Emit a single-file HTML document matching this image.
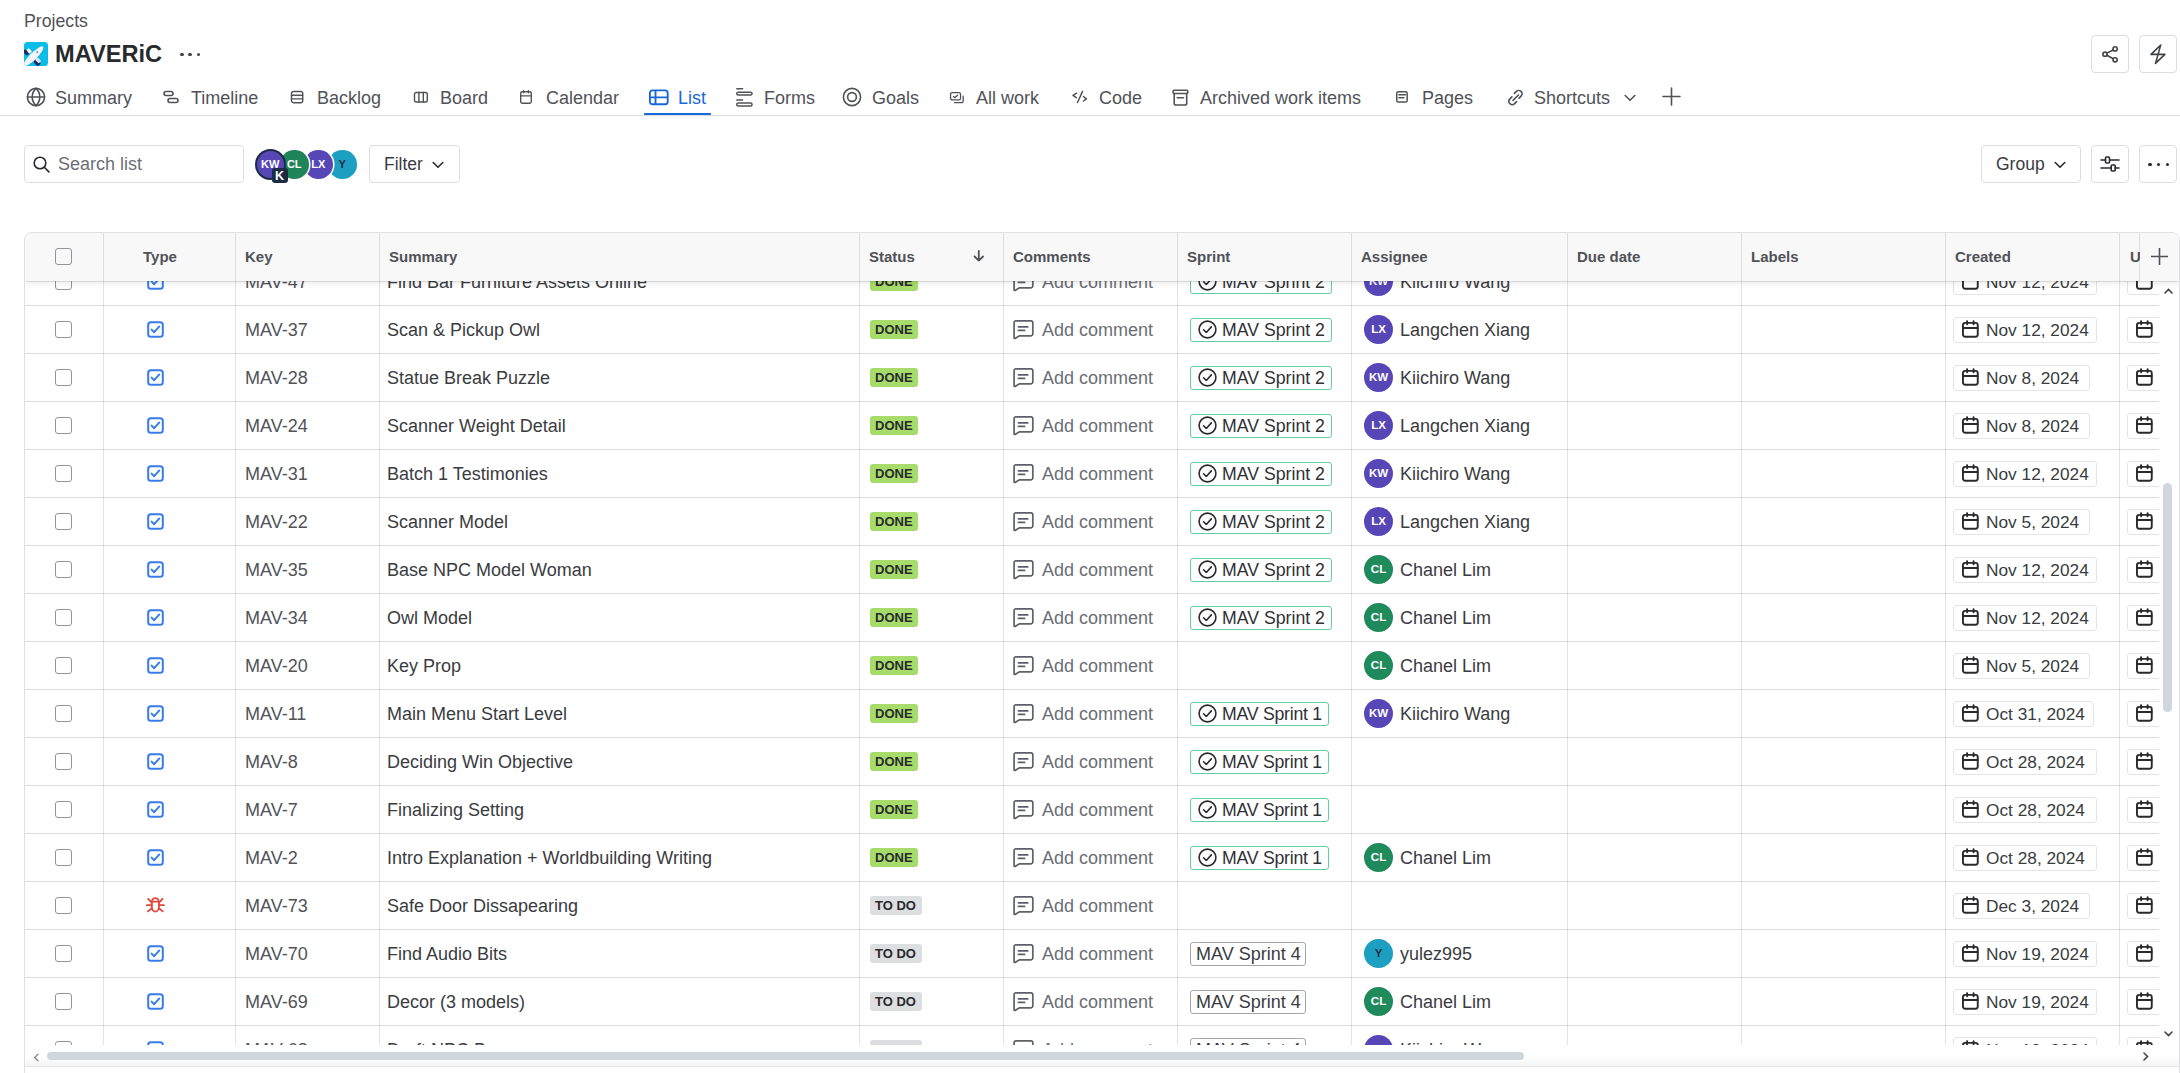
<!DOCTYPE html>
<html><head><meta charset="utf-8"><title>MAVERiC - List</title>
<style>
*{box-sizing:border-box;margin:0;padding:0}
html,body{width:2180px;height:1073px;overflow:hidden;background:#fff}
body{font-family:"Liberation Sans",sans-serif;color:#292a2e;position:relative}
.a{position:absolute;white-space:nowrap}
.ic{position:absolute;display:block;color:#505258}
.ic svg{display:block}
.tab{position:absolute;top:87px;height:22px;line-height:22px;font-size:18px;color:#505258}
.btn{position:absolute;border:1px solid #dcdde0;border-radius:4px;background:#fff}
.hd{position:absolute;top:247px;line-height:20px;font-size:15px;font-weight:bold;color:#505258}
.vl{position:absolute;width:1px;background:rgba(0,0,0,0.1)}
.hl{position:absolute;height:1px;background:rgba(0,0,0,0.135)}
.cb{position:absolute;width:17px;height:17px;border:1.5px solid #92949b;border-radius:3px;background:#fff}
.t{position:absolute;font-size:18px;line-height:22px;white-space:nowrap;color:#3a3c41}
.loz{position:absolute;height:19px;border-radius:3px;font-size:13px;font-weight:bold;line-height:19px;padding:0 5px;color:#292a2e}
.spr{position:absolute;height:24px;border:1px solid #5fcea0;border-radius:3px;font-size:18px;line-height:22px;color:#292a2e}
.av{position:absolute;width:29px;height:29px;border-radius:50%;color:#fff;font-size:11.5px;font-weight:bold;text-align:center;line-height:29px}
.date{position:absolute;height:26px;border:1px solid #e3e4e7;border-radius:3px}
</style></head><body>

<div class="a" style="left:24px;top:9.5px;font-size:17.7px;line-height:22px;color:#505258">Projects</div>
<div class="ic" style="left:24px;top:42px"><svg width="24" height="24" viewBox="0 0 24 24"><defs><clipPath id="lc"><rect width="24" height="24" rx="3.5"/></clipPath></defs><g clip-path="url(#lc)"><rect width="24" height="24" fill="#08bde6"/><g transform="rotate(-45 12 12)"><rect x="4.2" y="0.6" width="3.8" height="6.4" rx="1.8" fill="#1f2a6b"/><rect x="7.6" y="2.4" width="3.6" height="5.2" rx="1.8" fill="#fff"/><rect x="4.4" y="15.8" width="4.4" height="6.4" rx="1.2" fill="#1f2a6b"/><rect x="7.2" y="15.2" width="3.6" height="5.4" rx="1" fill="#e4dcff"/><ellipse cx="8.6" cy="11.8" rx="13.6" ry="3.5" fill="#f3f2ff"/><circle cx="14.2" cy="11.6" r="0.9" fill="#6a6fae"/></g></g></svg></div>
<div class="a" style="left:55px;top:39.5px;font-size:23.6px;line-height:28px;font-weight:bold;color:#292a2e">MAVERiC</div>
<div class="a" style="left:180px;top:52px"><span style="position:absolute;left:0.0px;top:0.5px;width:3.6px;height:3.6px;border-radius:50%;background:#42444a"></span><span style="position:absolute;left:8.3px;top:0.5px;width:3.6px;height:3.6px;border-radius:50%;background:#42444a"></span><span style="position:absolute;left:16.6px;top:0.5px;width:3.6px;height:3.6px;border-radius:50%;background:#42444a"></span></div>
<div class="btn" style="left:2091px;top:35px;width:38px;height:38px;"></div><div class="ic" style="left:2101px;top:44px;color:#42444a"><svg width="18" height="20" viewBox="0 0 18 20" fill="none" stroke="currentColor" stroke-width="1.6" stroke-linecap="round" stroke-linejoin="round"><circle cx="14.1" cy="4.9" r="2.1"/><circle cx="4" cy="10.2" r="2.1"/><circle cx="14.1" cy="15.8" r="2.1"/><path d="M5.9 9.1L12.2 6M5.9 11.3L12.2 14.7"/></svg></div>
<div class="btn" style="left:2139px;top:35px;width:38px;height:38px;"></div><div class="ic" style="left:2149px;top:43px;color:#42444a"><svg width="18" height="22" viewBox="0 0 18 22" fill="none" stroke="currentColor" stroke-width="1.6" stroke-linecap="round" stroke-linejoin="round"><path d="M11.7 2.1L2 11.4H15.9L6.5 20.4Z"/></svg></div>
<div class="ic" style="left:26px;top:87px;color:#505258"><svg width="20" height="20" viewBox="0 0 20 20" fill="none" stroke="currentColor" stroke-width="1.6" stroke-linecap="round" stroke-linejoin="round"><circle cx="10" cy="10" r="8.6"/><path d="M1.6 10h16.8M10 1.4c-2.6 2.4-3.8 5.3-3.8 8.6s1.2 6.2 3.8 8.6M10 1.4c2.6 2.4 3.8 5.3 3.8 8.6s-1.2 6.2-3.8 8.6"/></svg></div>
<div class="tab" style="left:55px;color:#505258">Summary</div>
<div class="ic" style="left:163px;top:89px;color:#505258"><svg width="16" height="16" viewBox="0 0 16 16" fill="none" stroke="currentColor" stroke-width="1.6" stroke-linecap="round" stroke-linejoin="round"><rect x="1" y="2.5" width="9" height="4" rx="2"/><rect x="5" y="9.5" width="10" height="4" rx="2"/></svg></div>
<div class="tab" style="left:191px;color:#505258">Timeline</div>
<div class="ic" style="left:290px;top:90px;color:#505258"><svg width="14" height="14" viewBox="0 0 14 14" fill="none" stroke="currentColor" stroke-linecap="round" stroke-linejoin="round" stroke-width="1.4"><rect x="1.5" y="1.5" width="11.2" height="11.2" rx="2"/><path d="M1.5 5.3H12.7M1.5 8.9H12.7"/></svg></div>
<div class="tab" style="left:317px;color:#505258">Backlog</div>
<div class="ic" style="left:413px;top:91px;color:#505258"><svg width="16" height="13" viewBox="0 0 16 13" fill="none" stroke="currentColor" stroke-linecap="round" stroke-linejoin="round" stroke-width="1.4"><rect x="1.5" y="1.45" width="12.8" height="9.5" rx="1.8"/><path d="M5.9 1.45V10.95M10.3 1.45V10.95"/></svg></div>
<div class="tab" style="left:440px;color:#505258">Board</div>
<div class="ic" style="left:519px;top:89px;color:#505258"><svg width="15" height="16" viewBox="0 0 15 16" fill="none" stroke="currentColor" stroke-linecap="round" stroke-linejoin="round" stroke-width="1.4"><rect x="1.7" y="2.7" width="10.6" height="11.5" rx="1.6"/><path d="M1.7 6.9H12.3M4.5 1.7V3.8M9.4 1.7V3.8"/></svg></div>
<div class="tab" style="left:546px;color:#505258">Calendar</div>
<div class="ic" style="left:648px;top:89px;color:#1868db"><svg width="21" height="17" viewBox="0 0 21 17" fill="none" stroke="currentColor" stroke-width="1.9"><rect x="1.9" y="1.4" width="17.8" height="13.9" rx="2.6"/><path d="M1.9 8.4H19.7M7.5 1.4V15.3"/></svg></div>
<div class="tab" style="left:678px;color:#1868db">List</div>
<div class="ic" style="left:735px;top:87px;color:#505258"><svg width="18" height="21" viewBox="0 0 18 21" fill="none" stroke="currentColor" stroke-linecap="round" stroke-linejoin="round" stroke-width="1.5"><path d="M1.8 1.7H7.6M1.8 12.9H7.6"/><rect x="1.75" y="5.15" width="15.3" height="2.9" rx="1.45"/><rect x="1.75" y="16.05" width="15.3" height="2.9" rx="1.45"/></svg></div>
<div class="tab" style="left:764px;color:#505258">Forms</div>
<div class="ic" style="left:842px;top:87px;color:#505258"><svg width="20" height="20" viewBox="0 0 20 20" fill="none" stroke="currentColor" stroke-width="1.6" stroke-linecap="round" stroke-linejoin="round"><circle cx="10" cy="10" r="8.6"/><circle cx="10" cy="10" r="4.4"/></svg></div>
<div class="tab" style="left:872px;color:#505258">Goals</div>
<div class="ic" style="left:949px;top:91px;color:#505258"><svg width="16" height="13" viewBox="0 0 16 13" fill="none" stroke="currentColor" stroke-linecap="round" stroke-linejoin="round" stroke-width="1.3"><rect x="1.55" y="1.55" width="10" height="7.4" rx="1.6"/><path d="M5.5 11.7H12.6a1.6 1.6 0 0 0 1.6-1.6V5.1"/><path d="M4.5 5.6L6 6.6 8.6 4.2"/></svg></div>
<div class="tab" style="left:976px;color:#505258">All work</div>
<div class="ic" style="left:1071px;top:90px;color:#505258"><svg width="17" height="14" viewBox="0 0 17 14" fill="none" stroke="currentColor" stroke-linecap="round" stroke-linejoin="round" stroke-width="1.5"><path d="M5.6 3.2L2 5.4 5.3 7.7M11.5 1.4L6.5 12.5M12.5 6.5L15.4 8.8 12.5 11"/></svg></div>
<div class="tab" style="left:1099px;color:#505258">Code</div>
<div class="ic" style="left:1171px;top:88px;color:#505258"><svg width="19" height="19" viewBox="0 0 19 19" fill="none" stroke="currentColor" stroke-linecap="round" stroke-linejoin="round" stroke-width="1.6"><rect x="2.1" y="2.2" width="14.7" height="3.3" rx="1"/><path d="M3.2 5.5V15.2a1.8 1.8 0 0 0 1.8 1.8H13.9a1.8 1.8 0 0 0 1.8-1.8V5.5M6.2 9.8H12.5"/></svg></div>
<div class="tab" style="left:1200px;color:#505258">Archived work items</div>
<div class="ic" style="left:1395px;top:90px;color:#505258"><svg width="14" height="14" viewBox="0 0 14 14" fill="none" stroke="currentColor" stroke-linecap="round" stroke-linejoin="round" stroke-width="1.5"><rect x="1.75" y="1.7" width="10.4" height="10.3" rx="1.6"/><path d="M3.9 4.7H10.4M3.9 7.8H8.9"/></svg></div>
<div class="tab" style="left:1422px;color:#505258">Pages</div>
<div class="ic" style="left:1506px;top:88px;color:#505258"><svg width="19" height="19" viewBox="0 0 19 19" fill="none" stroke="currentColor" stroke-linecap="round" stroke-linejoin="round" stroke-width="1.6"><path d="M7 12.4L12.4 7"/><path d="M8.4 5.4L10.4 3.4a3.3 3.3 0 0 1 4.7 4.7L13.1 10.1"/><path d="M10.6 13.6L8.6 15.6a3.3 3.3 0 0 1-4.7-4.7L5.9 8.9"/></svg></div>
<div class="tab" style="left:1534px;color:#505258">Shortcuts</div>
<div class="ic" style="left:1624px;top:94px;color:#505258"><svg width="12" height="8" viewBox="0 0 12 8" fill="none" stroke="currentColor" stroke-width="1.6" stroke-linecap="round" stroke-linejoin="round" stroke-width="1.8"><path d="M1.2 1.5L6 6.2l4.8-4.7"/></svg></div>
<div class="ic" style="left:1662px;top:87px;color:#505258"><svg width="19" height="19" viewBox="0 0 19 19" fill="none" stroke="currentColor" stroke-width="1.6" stroke-linecap="round" stroke-linejoin="round" stroke-width="1.8"><path d="M9.5 1v17M1 9.5h17"/></svg></div>
<div class="a" style="left:644px;top:113px;width:67px;height:3px;background:#1868db;border-radius:1px 1px 0 0"></div>
<div class="a" style="left:0;top:115px;width:2180px;height:1px;background:#dcdde0"></div>
<div class="btn" style="left:24px;top:145px;width:220px;height:38px;"></div>
<div class="ic" style="left:33px;top:156px;color:#292a2e"><svg width="17" height="17" viewBox="0 0 17 17" fill="none" stroke="currentColor" stroke-width="1.6" stroke-linecap="round" stroke-linejoin="round" stroke-width="2"><circle cx="7" cy="7" r="5.8"/><path d="M11.3 11.3l4.6 4.6"/></svg></div>
<div class="t" style="left:58px;top:153px;color:#6b6e76">Search list</div>
<div class="av" style="left:328px;top:150px;width:28.5px;height:28.5px;line-height:28.5px;font-size:11px;background:#1d9fc1;color:#1c2b42">Y</div>
<div class="av" style="left:304px;top:150px;width:28.5px;height:28.5px;line-height:28.5px;font-size:11px;background:#5746b6;box-shadow:0 0 0 1.5px #fff">LX</div>
<div class="av" style="left:280px;top:150px;width:28.5px;height:28.5px;line-height:28.5px;font-size:11px;background:#1f845a;box-shadow:0 0 0 1.5px #fff">CL</div>
<div class="a" style="left:254.5px;top:148.5px;width:31.5px;height:31.5px;border-radius:50%;background:#1c2b42"></div>
<div class="av" style="left:256.5px;top:150.5px;width:27.5px;height:27.5px;line-height:27.5px;font-size:11px;background:#5746b6">KW</div>
<div class="a" style="left:271.5px;top:167.5px;width:16px;height:15px;border-radius:3px;background:#1c2b42;color:#fff;font-size:12.5px;font-weight:bold;line-height:16px;text-align:center">K</div>
<div class="btn" style="left:369px;top:145px;width:91px;height:38px;"></div>
<div class="t" style="left:384px;top:153px;font-size:17.5px">Filter</div>
<div class="ic" style="left:432px;top:161px;color:#292a2e"><svg width="12" height="8" viewBox="0 0 12 8" fill="none" stroke="currentColor" stroke-width="1.6" stroke-linecap="round" stroke-linejoin="round" stroke-width="1.8"><path d="M1.2 1.5L6 6.2l4.8-4.7"/></svg></div>
<div class="btn" style="left:1981px;top:145px;width:100px;height:38px;"></div>
<div class="t" style="left:1996px;top:153px;font-size:17.5px">Group</div>
<div class="ic" style="left:2054px;top:161px;color:#292a2e"><svg width="12" height="8" viewBox="0 0 12 8" fill="none" stroke="currentColor" stroke-width="1.6" stroke-linecap="round" stroke-linejoin="round" stroke-width="1.8"><path d="M1.2 1.5L6 6.2l4.8-4.7"/></svg></div>
<div class="btn" style="left:2091px;top:145px;width:38px;height:38px;"></div><div class="ic" style="left:2100px;top:155px;color:#292a2e"><svg width="20" height="18" viewBox="0 0 20 18" fill="none" stroke="currentColor" stroke-width="1.6" stroke-linecap="round" stroke-linejoin="round" stroke-width="1.7"><path d="M1 5h4.5M10 5h9M1 13h10.2M15.2 13H19"/><rect x="5.5" y="2" width="4" height="6" rx="1"/><rect x="11.2" y="10" width="4" height="6" rx="1"/></svg></div>
<div class="btn" style="left:2139px;top:145px;width:38px;height:38px;"></div>
<div class="a" style="left:2148px;top:162.5px"><span style="position:absolute;left:0.0px;top:0;width:3.6px;height:3.6px;border-radius:50%;background:#292a2e"></span><span style="position:absolute;left:8.8px;top:0;width:3.6px;height:3.6px;border-radius:50%;background:#292a2e"></span><span style="position:absolute;left:17.6px;top:0;width:3.6px;height:3.6px;border-radius:50%;background:#292a2e"></span></div>
<div class="a" style="left:24px;top:232px;width:2156px;height:900px;border:1px solid #dfe0e3;border-radius:8px;overflow:hidden">
<div class="a" style="left:0;top:0;width:2134px;height:812px;overflow:hidden">
<div class="hl" style="left:0;top:72px;width:2134px"></div>
<div class="cb" style="left:30px;top:40px"></div>
<div class="ic" style="left:122px;top:40px"><svg width="17" height="17" viewBox="0 0 17 17" fill="none" stroke="#357de8" stroke-width="2" stroke-linecap="round" stroke-linejoin="round"><rect x="1.2" y="1.2" width="14.6" height="14.6" rx="2.6"/><path d="M4.6 8.6l2.6 2.6 5-5.6"/></svg></div>
<div class="t" style="left:220px;top:38px;color:#505258">MAV-47</div>
<div class="t" style="left:362px;top:38px">Find Bar Furniture Assets Online</div>
<div class="loz" style="left:845px;top:39px;width:48px;background:#a8dc6a">DONE</div>
<div class="ic" style="left:988px;top:39px;color:#5d6068"><svg width="21" height="20" viewBox="0 0 21 20" fill="none" stroke="currentColor" stroke-width="1.7" stroke-linecap="round" stroke-linejoin="round"><path d="M2.9 0.9H18a1.8 1.8 0 0 1 1.8 1.8V14a1.8 1.8 0 0 1-1.8 1.8H6.6L2 18.4A.6.6 0 0 1 1.1 17.9V2.7a1.8 1.8 0 0 1 1.8-1.8z"/><path d="M5.4 6.8H14.8M5.4 10.4H11.6"/></svg></div>
<div class="t" style="left:1017px;top:38px;color:#6b6e76">Add comment</div>
<div class="spr" style="left:1165px;top:37px;width:142px"></div>
<div class="ic" style="left:1173px;top:39px;color:#292a2e"><svg width="19" height="19" viewBox="0 0 19 19" fill="none" stroke="currentColor" stroke-width="1.6" stroke-linecap="round" stroke-linejoin="round" stroke-width="1.8"><circle cx="9.5" cy="9.5" r="8.4"/><path d="M5.6 9.8l2.7 2.7 5-5.6"/></svg></div>
<div class="t" style="left:1197px;top:38px;font-size:17.7px;color:#2f3136">MAV Sprint 2</div>
<div class="av" style="left:1339px;top:34px;background:#5746b6">KW</div>
<div class="t" style="left:1375px;top:38px">Kiichiro Wang</div>
<div class="date" style="left:1928px;top:36px;width:144px"></div>
<div class="ic" style="left:1937px;top:39px;color:#292a2e"><svg width="17" height="19" viewBox="0 0 17 19" fill="none" stroke="currentColor" stroke-width="1.9" stroke-linecap="round" stroke-linejoin="round"><rect x="0.95" y="2.85" width="14.8" height="13.9" rx="2.2"/><path d="M0.95 8H15.75M5.1 1.1V4.3M11.6 1.1V4.3"/></svg></div>
<div class="t" style="left:1961px;top:38px;font-size:17.3px">Nov 12, 2024</div>
<div class="date" style="left:2102px;top:36px;width:60px"></div>
<div class="ic" style="left:2111px;top:39px;color:#292a2e"><svg width="17" height="19" viewBox="0 0 17 19" fill="none" stroke="currentColor" stroke-width="1.9" stroke-linecap="round" stroke-linejoin="round"><rect x="0.95" y="2.85" width="14.8" height="13.9" rx="2.2"/><path d="M0.95 8H15.75M5.1 1.1V4.3M11.6 1.1V4.3"/></svg></div>
<div class="hl" style="left:0;top:120px;width:2134px"></div>
<div class="cb" style="left:30px;top:88px"></div>
<div class="ic" style="left:122px;top:88px"><svg width="17" height="17" viewBox="0 0 17 17" fill="none" stroke="#357de8" stroke-width="2" stroke-linecap="round" stroke-linejoin="round"><rect x="1.2" y="1.2" width="14.6" height="14.6" rx="2.6"/><path d="M4.6 8.6l2.6 2.6 5-5.6"/></svg></div>
<div class="t" style="left:220px;top:86px;color:#505258">MAV-37</div>
<div class="t" style="left:362px;top:86px">Scan &amp; Pickup Owl</div>
<div class="loz" style="left:845px;top:87px;width:48px;background:#a8dc6a">DONE</div>
<div class="ic" style="left:988px;top:87px;color:#5d6068"><svg width="21" height="20" viewBox="0 0 21 20" fill="none" stroke="currentColor" stroke-width="1.7" stroke-linecap="round" stroke-linejoin="round"><path d="M2.9 0.9H18a1.8 1.8 0 0 1 1.8 1.8V14a1.8 1.8 0 0 1-1.8 1.8H6.6L2 18.4A.6.6 0 0 1 1.1 17.9V2.7a1.8 1.8 0 0 1 1.8-1.8z"/><path d="M5.4 6.8H14.8M5.4 10.4H11.6"/></svg></div>
<div class="t" style="left:1017px;top:86px;color:#6b6e76">Add comment</div>
<div class="spr" style="left:1165px;top:85px;width:142px"></div>
<div class="ic" style="left:1173px;top:87px;color:#292a2e"><svg width="19" height="19" viewBox="0 0 19 19" fill="none" stroke="currentColor" stroke-width="1.6" stroke-linecap="round" stroke-linejoin="round" stroke-width="1.8"><circle cx="9.5" cy="9.5" r="8.4"/><path d="M5.6 9.8l2.7 2.7 5-5.6"/></svg></div>
<div class="t" style="left:1197px;top:86px;font-size:17.7px;color:#2f3136">MAV Sprint 2</div>
<div class="av" style="left:1339px;top:82px;background:#5746b6">LX</div>
<div class="t" style="left:1375px;top:86px">Langchen Xiang</div>
<div class="date" style="left:1928px;top:84px;width:144px"></div>
<div class="ic" style="left:1937px;top:87px;color:#292a2e"><svg width="17" height="19" viewBox="0 0 17 19" fill="none" stroke="currentColor" stroke-width="1.9" stroke-linecap="round" stroke-linejoin="round"><rect x="0.95" y="2.85" width="14.8" height="13.9" rx="2.2"/><path d="M0.95 8H15.75M5.1 1.1V4.3M11.6 1.1V4.3"/></svg></div>
<div class="t" style="left:1961px;top:86px;font-size:17.3px">Nov 12, 2024</div>
<div class="date" style="left:2102px;top:84px;width:60px"></div>
<div class="ic" style="left:2111px;top:87px;color:#292a2e"><svg width="17" height="19" viewBox="0 0 17 19" fill="none" stroke="currentColor" stroke-width="1.9" stroke-linecap="round" stroke-linejoin="round"><rect x="0.95" y="2.85" width="14.8" height="13.9" rx="2.2"/><path d="M0.95 8H15.75M5.1 1.1V4.3M11.6 1.1V4.3"/></svg></div>
<div class="hl" style="left:0;top:168px;width:2134px"></div>
<div class="cb" style="left:30px;top:136px"></div>
<div class="ic" style="left:122px;top:136px"><svg width="17" height="17" viewBox="0 0 17 17" fill="none" stroke="#357de8" stroke-width="2" stroke-linecap="round" stroke-linejoin="round"><rect x="1.2" y="1.2" width="14.6" height="14.6" rx="2.6"/><path d="M4.6 8.6l2.6 2.6 5-5.6"/></svg></div>
<div class="t" style="left:220px;top:134px;color:#505258">MAV-28</div>
<div class="t" style="left:362px;top:134px">Statue Break Puzzle</div>
<div class="loz" style="left:845px;top:135px;width:48px;background:#a8dc6a">DONE</div>
<div class="ic" style="left:988px;top:135px;color:#5d6068"><svg width="21" height="20" viewBox="0 0 21 20" fill="none" stroke="currentColor" stroke-width="1.7" stroke-linecap="round" stroke-linejoin="round"><path d="M2.9 0.9H18a1.8 1.8 0 0 1 1.8 1.8V14a1.8 1.8 0 0 1-1.8 1.8H6.6L2 18.4A.6.6 0 0 1 1.1 17.9V2.7a1.8 1.8 0 0 1 1.8-1.8z"/><path d="M5.4 6.8H14.8M5.4 10.4H11.6"/></svg></div>
<div class="t" style="left:1017px;top:134px;color:#6b6e76">Add comment</div>
<div class="spr" style="left:1165px;top:133px;width:142px"></div>
<div class="ic" style="left:1173px;top:135px;color:#292a2e"><svg width="19" height="19" viewBox="0 0 19 19" fill="none" stroke="currentColor" stroke-width="1.6" stroke-linecap="round" stroke-linejoin="round" stroke-width="1.8"><circle cx="9.5" cy="9.5" r="8.4"/><path d="M5.6 9.8l2.7 2.7 5-5.6"/></svg></div>
<div class="t" style="left:1197px;top:134px;font-size:17.7px;color:#2f3136">MAV Sprint 2</div>
<div class="av" style="left:1339px;top:130px;background:#5746b6">KW</div>
<div class="t" style="left:1375px;top:134px">Kiichiro Wang</div>
<div class="date" style="left:1928px;top:132px;width:137px"></div>
<div class="ic" style="left:1937px;top:135px;color:#292a2e"><svg width="17" height="19" viewBox="0 0 17 19" fill="none" stroke="currentColor" stroke-width="1.9" stroke-linecap="round" stroke-linejoin="round"><rect x="0.95" y="2.85" width="14.8" height="13.9" rx="2.2"/><path d="M0.95 8H15.75M5.1 1.1V4.3M11.6 1.1V4.3"/></svg></div>
<div class="t" style="left:1961px;top:134px;font-size:17.3px">Nov 8, 2024</div>
<div class="date" style="left:2102px;top:132px;width:60px"></div>
<div class="ic" style="left:2111px;top:135px;color:#292a2e"><svg width="17" height="19" viewBox="0 0 17 19" fill="none" stroke="currentColor" stroke-width="1.9" stroke-linecap="round" stroke-linejoin="round"><rect x="0.95" y="2.85" width="14.8" height="13.9" rx="2.2"/><path d="M0.95 8H15.75M5.1 1.1V4.3M11.6 1.1V4.3"/></svg></div>
<div class="hl" style="left:0;top:216px;width:2134px"></div>
<div class="cb" style="left:30px;top:184px"></div>
<div class="ic" style="left:122px;top:184px"><svg width="17" height="17" viewBox="0 0 17 17" fill="none" stroke="#357de8" stroke-width="2" stroke-linecap="round" stroke-linejoin="round"><rect x="1.2" y="1.2" width="14.6" height="14.6" rx="2.6"/><path d="M4.6 8.6l2.6 2.6 5-5.6"/></svg></div>
<div class="t" style="left:220px;top:182px;color:#505258">MAV-24</div>
<div class="t" style="left:362px;top:182px">Scanner Weight Detail</div>
<div class="loz" style="left:845px;top:183px;width:48px;background:#a8dc6a">DONE</div>
<div class="ic" style="left:988px;top:183px;color:#5d6068"><svg width="21" height="20" viewBox="0 0 21 20" fill="none" stroke="currentColor" stroke-width="1.7" stroke-linecap="round" stroke-linejoin="round"><path d="M2.9 0.9H18a1.8 1.8 0 0 1 1.8 1.8V14a1.8 1.8 0 0 1-1.8 1.8H6.6L2 18.4A.6.6 0 0 1 1.1 17.9V2.7a1.8 1.8 0 0 1 1.8-1.8z"/><path d="M5.4 6.8H14.8M5.4 10.4H11.6"/></svg></div>
<div class="t" style="left:1017px;top:182px;color:#6b6e76">Add comment</div>
<div class="spr" style="left:1165px;top:181px;width:142px"></div>
<div class="ic" style="left:1173px;top:183px;color:#292a2e"><svg width="19" height="19" viewBox="0 0 19 19" fill="none" stroke="currentColor" stroke-width="1.6" stroke-linecap="round" stroke-linejoin="round" stroke-width="1.8"><circle cx="9.5" cy="9.5" r="8.4"/><path d="M5.6 9.8l2.7 2.7 5-5.6"/></svg></div>
<div class="t" style="left:1197px;top:182px;font-size:17.7px;color:#2f3136">MAV Sprint 2</div>
<div class="av" style="left:1339px;top:178px;background:#5746b6">LX</div>
<div class="t" style="left:1375px;top:182px">Langchen Xiang</div>
<div class="date" style="left:1928px;top:180px;width:137px"></div>
<div class="ic" style="left:1937px;top:183px;color:#292a2e"><svg width="17" height="19" viewBox="0 0 17 19" fill="none" stroke="currentColor" stroke-width="1.9" stroke-linecap="round" stroke-linejoin="round"><rect x="0.95" y="2.85" width="14.8" height="13.9" rx="2.2"/><path d="M0.95 8H15.75M5.1 1.1V4.3M11.6 1.1V4.3"/></svg></div>
<div class="t" style="left:1961px;top:182px;font-size:17.3px">Nov 8, 2024</div>
<div class="date" style="left:2102px;top:180px;width:60px"></div>
<div class="ic" style="left:2111px;top:183px;color:#292a2e"><svg width="17" height="19" viewBox="0 0 17 19" fill="none" stroke="currentColor" stroke-width="1.9" stroke-linecap="round" stroke-linejoin="round"><rect x="0.95" y="2.85" width="14.8" height="13.9" rx="2.2"/><path d="M0.95 8H15.75M5.1 1.1V4.3M11.6 1.1V4.3"/></svg></div>
<div class="hl" style="left:0;top:264px;width:2134px"></div>
<div class="cb" style="left:30px;top:232px"></div>
<div class="ic" style="left:122px;top:232px"><svg width="17" height="17" viewBox="0 0 17 17" fill="none" stroke="#357de8" stroke-width="2" stroke-linecap="round" stroke-linejoin="round"><rect x="1.2" y="1.2" width="14.6" height="14.6" rx="2.6"/><path d="M4.6 8.6l2.6 2.6 5-5.6"/></svg></div>
<div class="t" style="left:220px;top:230px;color:#505258">MAV-31</div>
<div class="t" style="left:362px;top:230px">Batch 1 Testimonies</div>
<div class="loz" style="left:845px;top:231px;width:48px;background:#a8dc6a">DONE</div>
<div class="ic" style="left:988px;top:231px;color:#5d6068"><svg width="21" height="20" viewBox="0 0 21 20" fill="none" stroke="currentColor" stroke-width="1.7" stroke-linecap="round" stroke-linejoin="round"><path d="M2.9 0.9H18a1.8 1.8 0 0 1 1.8 1.8V14a1.8 1.8 0 0 1-1.8 1.8H6.6L2 18.4A.6.6 0 0 1 1.1 17.9V2.7a1.8 1.8 0 0 1 1.8-1.8z"/><path d="M5.4 6.8H14.8M5.4 10.4H11.6"/></svg></div>
<div class="t" style="left:1017px;top:230px;color:#6b6e76">Add comment</div>
<div class="spr" style="left:1165px;top:229px;width:142px"></div>
<div class="ic" style="left:1173px;top:231px;color:#292a2e"><svg width="19" height="19" viewBox="0 0 19 19" fill="none" stroke="currentColor" stroke-width="1.6" stroke-linecap="round" stroke-linejoin="round" stroke-width="1.8"><circle cx="9.5" cy="9.5" r="8.4"/><path d="M5.6 9.8l2.7 2.7 5-5.6"/></svg></div>
<div class="t" style="left:1197px;top:230px;font-size:17.7px;color:#2f3136">MAV Sprint 2</div>
<div class="av" style="left:1339px;top:226px;background:#5746b6">KW</div>
<div class="t" style="left:1375px;top:230px">Kiichiro Wang</div>
<div class="date" style="left:1928px;top:228px;width:144px"></div>
<div class="ic" style="left:1937px;top:231px;color:#292a2e"><svg width="17" height="19" viewBox="0 0 17 19" fill="none" stroke="currentColor" stroke-width="1.9" stroke-linecap="round" stroke-linejoin="round"><rect x="0.95" y="2.85" width="14.8" height="13.9" rx="2.2"/><path d="M0.95 8H15.75M5.1 1.1V4.3M11.6 1.1V4.3"/></svg></div>
<div class="t" style="left:1961px;top:230px;font-size:17.3px">Nov 12, 2024</div>
<div class="date" style="left:2102px;top:228px;width:60px"></div>
<div class="ic" style="left:2111px;top:231px;color:#292a2e"><svg width="17" height="19" viewBox="0 0 17 19" fill="none" stroke="currentColor" stroke-width="1.9" stroke-linecap="round" stroke-linejoin="round"><rect x="0.95" y="2.85" width="14.8" height="13.9" rx="2.2"/><path d="M0.95 8H15.75M5.1 1.1V4.3M11.6 1.1V4.3"/></svg></div>
<div class="hl" style="left:0;top:312px;width:2134px"></div>
<div class="cb" style="left:30px;top:280px"></div>
<div class="ic" style="left:122px;top:280px"><svg width="17" height="17" viewBox="0 0 17 17" fill="none" stroke="#357de8" stroke-width="2" stroke-linecap="round" stroke-linejoin="round"><rect x="1.2" y="1.2" width="14.6" height="14.6" rx="2.6"/><path d="M4.6 8.6l2.6 2.6 5-5.6"/></svg></div>
<div class="t" style="left:220px;top:278px;color:#505258">MAV-22</div>
<div class="t" style="left:362px;top:278px">Scanner Model</div>
<div class="loz" style="left:845px;top:279px;width:48px;background:#a8dc6a">DONE</div>
<div class="ic" style="left:988px;top:279px;color:#5d6068"><svg width="21" height="20" viewBox="0 0 21 20" fill="none" stroke="currentColor" stroke-width="1.7" stroke-linecap="round" stroke-linejoin="round"><path d="M2.9 0.9H18a1.8 1.8 0 0 1 1.8 1.8V14a1.8 1.8 0 0 1-1.8 1.8H6.6L2 18.4A.6.6 0 0 1 1.1 17.9V2.7a1.8 1.8 0 0 1 1.8-1.8z"/><path d="M5.4 6.8H14.8M5.4 10.4H11.6"/></svg></div>
<div class="t" style="left:1017px;top:278px;color:#6b6e76">Add comment</div>
<div class="spr" style="left:1165px;top:277px;width:142px"></div>
<div class="ic" style="left:1173px;top:279px;color:#292a2e"><svg width="19" height="19" viewBox="0 0 19 19" fill="none" stroke="currentColor" stroke-width="1.6" stroke-linecap="round" stroke-linejoin="round" stroke-width="1.8"><circle cx="9.5" cy="9.5" r="8.4"/><path d="M5.6 9.8l2.7 2.7 5-5.6"/></svg></div>
<div class="t" style="left:1197px;top:278px;font-size:17.7px;color:#2f3136">MAV Sprint 2</div>
<div class="av" style="left:1339px;top:274px;background:#5746b6">LX</div>
<div class="t" style="left:1375px;top:278px">Langchen Xiang</div>
<div class="date" style="left:1928px;top:276px;width:137px"></div>
<div class="ic" style="left:1937px;top:279px;color:#292a2e"><svg width="17" height="19" viewBox="0 0 17 19" fill="none" stroke="currentColor" stroke-width="1.9" stroke-linecap="round" stroke-linejoin="round"><rect x="0.95" y="2.85" width="14.8" height="13.9" rx="2.2"/><path d="M0.95 8H15.75M5.1 1.1V4.3M11.6 1.1V4.3"/></svg></div>
<div class="t" style="left:1961px;top:278px;font-size:17.3px">Nov 5, 2024</div>
<div class="date" style="left:2102px;top:276px;width:60px"></div>
<div class="ic" style="left:2111px;top:279px;color:#292a2e"><svg width="17" height="19" viewBox="0 0 17 19" fill="none" stroke="currentColor" stroke-width="1.9" stroke-linecap="round" stroke-linejoin="round"><rect x="0.95" y="2.85" width="14.8" height="13.9" rx="2.2"/><path d="M0.95 8H15.75M5.1 1.1V4.3M11.6 1.1V4.3"/></svg></div>
<div class="hl" style="left:0;top:360px;width:2134px"></div>
<div class="cb" style="left:30px;top:328px"></div>
<div class="ic" style="left:122px;top:328px"><svg width="17" height="17" viewBox="0 0 17 17" fill="none" stroke="#357de8" stroke-width="2" stroke-linecap="round" stroke-linejoin="round"><rect x="1.2" y="1.2" width="14.6" height="14.6" rx="2.6"/><path d="M4.6 8.6l2.6 2.6 5-5.6"/></svg></div>
<div class="t" style="left:220px;top:326px;color:#505258">MAV-35</div>
<div class="t" style="left:362px;top:326px">Base NPC Model Woman</div>
<div class="loz" style="left:845px;top:327px;width:48px;background:#a8dc6a">DONE</div>
<div class="ic" style="left:988px;top:327px;color:#5d6068"><svg width="21" height="20" viewBox="0 0 21 20" fill="none" stroke="currentColor" stroke-width="1.7" stroke-linecap="round" stroke-linejoin="round"><path d="M2.9 0.9H18a1.8 1.8 0 0 1 1.8 1.8V14a1.8 1.8 0 0 1-1.8 1.8H6.6L2 18.4A.6.6 0 0 1 1.1 17.9V2.7a1.8 1.8 0 0 1 1.8-1.8z"/><path d="M5.4 6.8H14.8M5.4 10.4H11.6"/></svg></div>
<div class="t" style="left:1017px;top:326px;color:#6b6e76">Add comment</div>
<div class="spr" style="left:1165px;top:325px;width:142px"></div>
<div class="ic" style="left:1173px;top:327px;color:#292a2e"><svg width="19" height="19" viewBox="0 0 19 19" fill="none" stroke="currentColor" stroke-width="1.6" stroke-linecap="round" stroke-linejoin="round" stroke-width="1.8"><circle cx="9.5" cy="9.5" r="8.4"/><path d="M5.6 9.8l2.7 2.7 5-5.6"/></svg></div>
<div class="t" style="left:1197px;top:326px;font-size:17.7px;color:#2f3136">MAV Sprint 2</div>
<div class="av" style="left:1339px;top:322px;background:#1f8a5c">CL</div>
<div class="t" style="left:1375px;top:326px">Chanel Lim</div>
<div class="date" style="left:1928px;top:324px;width:144px"></div>
<div class="ic" style="left:1937px;top:327px;color:#292a2e"><svg width="17" height="19" viewBox="0 0 17 19" fill="none" stroke="currentColor" stroke-width="1.9" stroke-linecap="round" stroke-linejoin="round"><rect x="0.95" y="2.85" width="14.8" height="13.9" rx="2.2"/><path d="M0.95 8H15.75M5.1 1.1V4.3M11.6 1.1V4.3"/></svg></div>
<div class="t" style="left:1961px;top:326px;font-size:17.3px">Nov 12, 2024</div>
<div class="date" style="left:2102px;top:324px;width:60px"></div>
<div class="ic" style="left:2111px;top:327px;color:#292a2e"><svg width="17" height="19" viewBox="0 0 17 19" fill="none" stroke="currentColor" stroke-width="1.9" stroke-linecap="round" stroke-linejoin="round"><rect x="0.95" y="2.85" width="14.8" height="13.9" rx="2.2"/><path d="M0.95 8H15.75M5.1 1.1V4.3M11.6 1.1V4.3"/></svg></div>
<div class="hl" style="left:0;top:408px;width:2134px"></div>
<div class="cb" style="left:30px;top:376px"></div>
<div class="ic" style="left:122px;top:376px"><svg width="17" height="17" viewBox="0 0 17 17" fill="none" stroke="#357de8" stroke-width="2" stroke-linecap="round" stroke-linejoin="round"><rect x="1.2" y="1.2" width="14.6" height="14.6" rx="2.6"/><path d="M4.6 8.6l2.6 2.6 5-5.6"/></svg></div>
<div class="t" style="left:220px;top:374px;color:#505258">MAV-34</div>
<div class="t" style="left:362px;top:374px">Owl Model</div>
<div class="loz" style="left:845px;top:375px;width:48px;background:#a8dc6a">DONE</div>
<div class="ic" style="left:988px;top:375px;color:#5d6068"><svg width="21" height="20" viewBox="0 0 21 20" fill="none" stroke="currentColor" stroke-width="1.7" stroke-linecap="round" stroke-linejoin="round"><path d="M2.9 0.9H18a1.8 1.8 0 0 1 1.8 1.8V14a1.8 1.8 0 0 1-1.8 1.8H6.6L2 18.4A.6.6 0 0 1 1.1 17.9V2.7a1.8 1.8 0 0 1 1.8-1.8z"/><path d="M5.4 6.8H14.8M5.4 10.4H11.6"/></svg></div>
<div class="t" style="left:1017px;top:374px;color:#6b6e76">Add comment</div>
<div class="spr" style="left:1165px;top:373px;width:142px"></div>
<div class="ic" style="left:1173px;top:375px;color:#292a2e"><svg width="19" height="19" viewBox="0 0 19 19" fill="none" stroke="currentColor" stroke-width="1.6" stroke-linecap="round" stroke-linejoin="round" stroke-width="1.8"><circle cx="9.5" cy="9.5" r="8.4"/><path d="M5.6 9.8l2.7 2.7 5-5.6"/></svg></div>
<div class="t" style="left:1197px;top:374px;font-size:17.7px;color:#2f3136">MAV Sprint 2</div>
<div class="av" style="left:1339px;top:370px;background:#1f8a5c">CL</div>
<div class="t" style="left:1375px;top:374px">Chanel Lim</div>
<div class="date" style="left:1928px;top:372px;width:144px"></div>
<div class="ic" style="left:1937px;top:375px;color:#292a2e"><svg width="17" height="19" viewBox="0 0 17 19" fill="none" stroke="currentColor" stroke-width="1.9" stroke-linecap="round" stroke-linejoin="round"><rect x="0.95" y="2.85" width="14.8" height="13.9" rx="2.2"/><path d="M0.95 8H15.75M5.1 1.1V4.3M11.6 1.1V4.3"/></svg></div>
<div class="t" style="left:1961px;top:374px;font-size:17.3px">Nov 12, 2024</div>
<div class="date" style="left:2102px;top:372px;width:60px"></div>
<div class="ic" style="left:2111px;top:375px;color:#292a2e"><svg width="17" height="19" viewBox="0 0 17 19" fill="none" stroke="currentColor" stroke-width="1.9" stroke-linecap="round" stroke-linejoin="round"><rect x="0.95" y="2.85" width="14.8" height="13.9" rx="2.2"/><path d="M0.95 8H15.75M5.1 1.1V4.3M11.6 1.1V4.3"/></svg></div>
<div class="hl" style="left:0;top:456px;width:2134px"></div>
<div class="cb" style="left:30px;top:424px"></div>
<div class="ic" style="left:122px;top:424px"><svg width="17" height="17" viewBox="0 0 17 17" fill="none" stroke="#357de8" stroke-width="2" stroke-linecap="round" stroke-linejoin="round"><rect x="1.2" y="1.2" width="14.6" height="14.6" rx="2.6"/><path d="M4.6 8.6l2.6 2.6 5-5.6"/></svg></div>
<div class="t" style="left:220px;top:422px;color:#505258">MAV-20</div>
<div class="t" style="left:362px;top:422px">Key Prop</div>
<div class="loz" style="left:845px;top:423px;width:48px;background:#a8dc6a">DONE</div>
<div class="ic" style="left:988px;top:423px;color:#5d6068"><svg width="21" height="20" viewBox="0 0 21 20" fill="none" stroke="currentColor" stroke-width="1.7" stroke-linecap="round" stroke-linejoin="round"><path d="M2.9 0.9H18a1.8 1.8 0 0 1 1.8 1.8V14a1.8 1.8 0 0 1-1.8 1.8H6.6L2 18.4A.6.6 0 0 1 1.1 17.9V2.7a1.8 1.8 0 0 1 1.8-1.8z"/><path d="M5.4 6.8H14.8M5.4 10.4H11.6"/></svg></div>
<div class="t" style="left:1017px;top:422px;color:#6b6e76">Add comment</div>
<div class="av" style="left:1339px;top:418px;background:#1f8a5c">CL</div>
<div class="t" style="left:1375px;top:422px">Chanel Lim</div>
<div class="date" style="left:1928px;top:420px;width:137px"></div>
<div class="ic" style="left:1937px;top:423px;color:#292a2e"><svg width="17" height="19" viewBox="0 0 17 19" fill="none" stroke="currentColor" stroke-width="1.9" stroke-linecap="round" stroke-linejoin="round"><rect x="0.95" y="2.85" width="14.8" height="13.9" rx="2.2"/><path d="M0.95 8H15.75M5.1 1.1V4.3M11.6 1.1V4.3"/></svg></div>
<div class="t" style="left:1961px;top:422px;font-size:17.3px">Nov 5, 2024</div>
<div class="date" style="left:2102px;top:420px;width:60px"></div>
<div class="ic" style="left:2111px;top:423px;color:#292a2e"><svg width="17" height="19" viewBox="0 0 17 19" fill="none" stroke="currentColor" stroke-width="1.9" stroke-linecap="round" stroke-linejoin="round"><rect x="0.95" y="2.85" width="14.8" height="13.9" rx="2.2"/><path d="M0.95 8H15.75M5.1 1.1V4.3M11.6 1.1V4.3"/></svg></div>
<div class="hl" style="left:0;top:504px;width:2134px"></div>
<div class="cb" style="left:30px;top:472px"></div>
<div class="ic" style="left:122px;top:472px"><svg width="17" height="17" viewBox="0 0 17 17" fill="none" stroke="#357de8" stroke-width="2" stroke-linecap="round" stroke-linejoin="round"><rect x="1.2" y="1.2" width="14.6" height="14.6" rx="2.6"/><path d="M4.6 8.6l2.6 2.6 5-5.6"/></svg></div>
<div class="t" style="left:220px;top:470px;color:#505258">MAV-11</div>
<div class="t" style="left:362px;top:470px">Main Menu Start Level</div>
<div class="loz" style="left:845px;top:471px;width:48px;background:#a8dc6a">DONE</div>
<div class="ic" style="left:988px;top:471px;color:#5d6068"><svg width="21" height="20" viewBox="0 0 21 20" fill="none" stroke="currentColor" stroke-width="1.7" stroke-linecap="round" stroke-linejoin="round"><path d="M2.9 0.9H18a1.8 1.8 0 0 1 1.8 1.8V14a1.8 1.8 0 0 1-1.8 1.8H6.6L2 18.4A.6.6 0 0 1 1.1 17.9V2.7a1.8 1.8 0 0 1 1.8-1.8z"/><path d="M5.4 6.8H14.8M5.4 10.4H11.6"/></svg></div>
<div class="t" style="left:1017px;top:470px;color:#6b6e76">Add comment</div>
<div class="spr" style="left:1165px;top:469px;width:139px"></div>
<div class="ic" style="left:1173px;top:471px;color:#292a2e"><svg width="19" height="19" viewBox="0 0 19 19" fill="none" stroke="currentColor" stroke-width="1.6" stroke-linecap="round" stroke-linejoin="round" stroke-width="1.8"><circle cx="9.5" cy="9.5" r="8.4"/><path d="M5.6 9.8l2.7 2.7 5-5.6"/></svg></div>
<div class="t" style="left:1197px;top:470px;font-size:17.7px;color:#2f3136;letter-spacing:-0.25px">MAV Sprint 1</div>
<div class="av" style="left:1339px;top:466px;background:#5746b6">KW</div>
<div class="t" style="left:1375px;top:470px">Kiichiro Wang</div>
<div class="date" style="left:1928px;top:468px;width:141px"></div>
<div class="ic" style="left:1937px;top:471px;color:#292a2e"><svg width="17" height="19" viewBox="0 0 17 19" fill="none" stroke="currentColor" stroke-width="1.9" stroke-linecap="round" stroke-linejoin="round"><rect x="0.95" y="2.85" width="14.8" height="13.9" rx="2.2"/><path d="M0.95 8H15.75M5.1 1.1V4.3M11.6 1.1V4.3"/></svg></div>
<div class="t" style="left:1961px;top:470px;font-size:17.3px">Oct 31, 2024</div>
<div class="date" style="left:2102px;top:468px;width:60px"></div>
<div class="ic" style="left:2111px;top:471px;color:#292a2e"><svg width="17" height="19" viewBox="0 0 17 19" fill="none" stroke="currentColor" stroke-width="1.9" stroke-linecap="round" stroke-linejoin="round"><rect x="0.95" y="2.85" width="14.8" height="13.9" rx="2.2"/><path d="M0.95 8H15.75M5.1 1.1V4.3M11.6 1.1V4.3"/></svg></div>
<div class="hl" style="left:0;top:552px;width:2134px"></div>
<div class="cb" style="left:30px;top:520px"></div>
<div class="ic" style="left:122px;top:520px"><svg width="17" height="17" viewBox="0 0 17 17" fill="none" stroke="#357de8" stroke-width="2" stroke-linecap="round" stroke-linejoin="round"><rect x="1.2" y="1.2" width="14.6" height="14.6" rx="2.6"/><path d="M4.6 8.6l2.6 2.6 5-5.6"/></svg></div>
<div class="t" style="left:220px;top:518px;color:#505258">MAV-8</div>
<div class="t" style="left:362px;top:518px">Deciding Win Objective</div>
<div class="loz" style="left:845px;top:519px;width:48px;background:#a8dc6a">DONE</div>
<div class="ic" style="left:988px;top:519px;color:#5d6068"><svg width="21" height="20" viewBox="0 0 21 20" fill="none" stroke="currentColor" stroke-width="1.7" stroke-linecap="round" stroke-linejoin="round"><path d="M2.9 0.9H18a1.8 1.8 0 0 1 1.8 1.8V14a1.8 1.8 0 0 1-1.8 1.8H6.6L2 18.4A.6.6 0 0 1 1.1 17.9V2.7a1.8 1.8 0 0 1 1.8-1.8z"/><path d="M5.4 6.8H14.8M5.4 10.4H11.6"/></svg></div>
<div class="t" style="left:1017px;top:518px;color:#6b6e76">Add comment</div>
<div class="spr" style="left:1165px;top:517px;width:139px"></div>
<div class="ic" style="left:1173px;top:519px;color:#292a2e"><svg width="19" height="19" viewBox="0 0 19 19" fill="none" stroke="currentColor" stroke-width="1.6" stroke-linecap="round" stroke-linejoin="round" stroke-width="1.8"><circle cx="9.5" cy="9.5" r="8.4"/><path d="M5.6 9.8l2.7 2.7 5-5.6"/></svg></div>
<div class="t" style="left:1197px;top:518px;font-size:17.7px;color:#2f3136;letter-spacing:-0.25px">MAV Sprint 1</div>
<div class="date" style="left:1928px;top:516px;width:144px"></div>
<div class="ic" style="left:1937px;top:519px;color:#292a2e"><svg width="17" height="19" viewBox="0 0 17 19" fill="none" stroke="currentColor" stroke-width="1.9" stroke-linecap="round" stroke-linejoin="round"><rect x="0.95" y="2.85" width="14.8" height="13.9" rx="2.2"/><path d="M0.95 8H15.75M5.1 1.1V4.3M11.6 1.1V4.3"/></svg></div>
<div class="t" style="left:1961px;top:518px;font-size:17.3px">Oct 28, 2024</div>
<div class="date" style="left:2102px;top:516px;width:60px"></div>
<div class="ic" style="left:2111px;top:519px;color:#292a2e"><svg width="17" height="19" viewBox="0 0 17 19" fill="none" stroke="currentColor" stroke-width="1.9" stroke-linecap="round" stroke-linejoin="round"><rect x="0.95" y="2.85" width="14.8" height="13.9" rx="2.2"/><path d="M0.95 8H15.75M5.1 1.1V4.3M11.6 1.1V4.3"/></svg></div>
<div class="hl" style="left:0;top:600px;width:2134px"></div>
<div class="cb" style="left:30px;top:568px"></div>
<div class="ic" style="left:122px;top:568px"><svg width="17" height="17" viewBox="0 0 17 17" fill="none" stroke="#357de8" stroke-width="2" stroke-linecap="round" stroke-linejoin="round"><rect x="1.2" y="1.2" width="14.6" height="14.6" rx="2.6"/><path d="M4.6 8.6l2.6 2.6 5-5.6"/></svg></div>
<div class="t" style="left:220px;top:566px;color:#505258">MAV-7</div>
<div class="t" style="left:362px;top:566px">Finalizing Setting</div>
<div class="loz" style="left:845px;top:567px;width:48px;background:#a8dc6a">DONE</div>
<div class="ic" style="left:988px;top:567px;color:#5d6068"><svg width="21" height="20" viewBox="0 0 21 20" fill="none" stroke="currentColor" stroke-width="1.7" stroke-linecap="round" stroke-linejoin="round"><path d="M2.9 0.9H18a1.8 1.8 0 0 1 1.8 1.8V14a1.8 1.8 0 0 1-1.8 1.8H6.6L2 18.4A.6.6 0 0 1 1.1 17.9V2.7a1.8 1.8 0 0 1 1.8-1.8z"/><path d="M5.4 6.8H14.8M5.4 10.4H11.6"/></svg></div>
<div class="t" style="left:1017px;top:566px;color:#6b6e76">Add comment</div>
<div class="spr" style="left:1165px;top:565px;width:139px"></div>
<div class="ic" style="left:1173px;top:567px;color:#292a2e"><svg width="19" height="19" viewBox="0 0 19 19" fill="none" stroke="currentColor" stroke-width="1.6" stroke-linecap="round" stroke-linejoin="round" stroke-width="1.8"><circle cx="9.5" cy="9.5" r="8.4"/><path d="M5.6 9.8l2.7 2.7 5-5.6"/></svg></div>
<div class="t" style="left:1197px;top:566px;font-size:17.7px;color:#2f3136;letter-spacing:-0.25px">MAV Sprint 1</div>
<div class="date" style="left:1928px;top:564px;width:144px"></div>
<div class="ic" style="left:1937px;top:567px;color:#292a2e"><svg width="17" height="19" viewBox="0 0 17 19" fill="none" stroke="currentColor" stroke-width="1.9" stroke-linecap="round" stroke-linejoin="round"><rect x="0.95" y="2.85" width="14.8" height="13.9" rx="2.2"/><path d="M0.95 8H15.75M5.1 1.1V4.3M11.6 1.1V4.3"/></svg></div>
<div class="t" style="left:1961px;top:566px;font-size:17.3px">Oct 28, 2024</div>
<div class="date" style="left:2102px;top:564px;width:60px"></div>
<div class="ic" style="left:2111px;top:567px;color:#292a2e"><svg width="17" height="19" viewBox="0 0 17 19" fill="none" stroke="currentColor" stroke-width="1.9" stroke-linecap="round" stroke-linejoin="round"><rect x="0.95" y="2.85" width="14.8" height="13.9" rx="2.2"/><path d="M0.95 8H15.75M5.1 1.1V4.3M11.6 1.1V4.3"/></svg></div>
<div class="hl" style="left:0;top:648px;width:2134px"></div>
<div class="cb" style="left:30px;top:616px"></div>
<div class="ic" style="left:122px;top:616px"><svg width="17" height="17" viewBox="0 0 17 17" fill="none" stroke="#357de8" stroke-width="2" stroke-linecap="round" stroke-linejoin="round"><rect x="1.2" y="1.2" width="14.6" height="14.6" rx="2.6"/><path d="M4.6 8.6l2.6 2.6 5-5.6"/></svg></div>
<div class="t" style="left:220px;top:614px;color:#505258">MAV-2</div>
<div class="t" style="left:362px;top:614px">Intro Explanation + Worldbuilding Writing</div>
<div class="loz" style="left:845px;top:615px;width:48px;background:#a8dc6a">DONE</div>
<div class="ic" style="left:988px;top:615px;color:#5d6068"><svg width="21" height="20" viewBox="0 0 21 20" fill="none" stroke="currentColor" stroke-width="1.7" stroke-linecap="round" stroke-linejoin="round"><path d="M2.9 0.9H18a1.8 1.8 0 0 1 1.8 1.8V14a1.8 1.8 0 0 1-1.8 1.8H6.6L2 18.4A.6.6 0 0 1 1.1 17.9V2.7a1.8 1.8 0 0 1 1.8-1.8z"/><path d="M5.4 6.8H14.8M5.4 10.4H11.6"/></svg></div>
<div class="t" style="left:1017px;top:614px;color:#6b6e76">Add comment</div>
<div class="spr" style="left:1165px;top:613px;width:139px"></div>
<div class="ic" style="left:1173px;top:615px;color:#292a2e"><svg width="19" height="19" viewBox="0 0 19 19" fill="none" stroke="currentColor" stroke-width="1.6" stroke-linecap="round" stroke-linejoin="round" stroke-width="1.8"><circle cx="9.5" cy="9.5" r="8.4"/><path d="M5.6 9.8l2.7 2.7 5-5.6"/></svg></div>
<div class="t" style="left:1197px;top:614px;font-size:17.7px;color:#2f3136;letter-spacing:-0.25px">MAV Sprint 1</div>
<div class="av" style="left:1339px;top:610px;background:#1f8a5c">CL</div>
<div class="t" style="left:1375px;top:614px">Chanel Lim</div>
<div class="date" style="left:1928px;top:612px;width:144px"></div>
<div class="ic" style="left:1937px;top:615px;color:#292a2e"><svg width="17" height="19" viewBox="0 0 17 19" fill="none" stroke="currentColor" stroke-width="1.9" stroke-linecap="round" stroke-linejoin="round"><rect x="0.95" y="2.85" width="14.8" height="13.9" rx="2.2"/><path d="M0.95 8H15.75M5.1 1.1V4.3M11.6 1.1V4.3"/></svg></div>
<div class="t" style="left:1961px;top:614px;font-size:17.3px">Oct 28, 2024</div>
<div class="date" style="left:2102px;top:612px;width:60px"></div>
<div class="ic" style="left:2111px;top:615px;color:#292a2e"><svg width="17" height="19" viewBox="0 0 17 19" fill="none" stroke="currentColor" stroke-width="1.9" stroke-linecap="round" stroke-linejoin="round"><rect x="0.95" y="2.85" width="14.8" height="13.9" rx="2.2"/><path d="M0.95 8H15.75M5.1 1.1V4.3M11.6 1.1V4.3"/></svg></div>
<div class="hl" style="left:0;top:696px;width:2134px"></div>
<div class="cb" style="left:30px;top:664px"></div>
<div class="ic" style="left:121px;top:663px"><svg width="19" height="17" viewBox="0 0 19 17" fill="none" stroke="#e6463b" stroke-width="1.8" stroke-linecap="round" stroke-linejoin="round"><path d="M5.9 5.6A3.45 3.45 0 0 1 12.8 5.6"/><path d="M5.8 5.6H12.9V11.2C12.9 13.6 11.3 15.6 9.35 15.6C7.4 15.6 5.8 13.6 5.8 11.2Z"/><path d="M5.8 6.8L2.2 2.8M12.9 6.8L16.5 2.8M0.8 9.2H5.8M12.9 9.2H17.9M5.8 12.2L2 15.4M12.9 12.2L16.7 15.4"/></svg></div>
<div class="t" style="left:220px;top:662px;color:#505258">MAV-73</div>
<div class="t" style="left:362px;top:662px">Safe Door Dissapearing</div>
<div class="loz" style="left:845px;top:663px;width:52px;background:#dddee1">TO DO</div>
<div class="ic" style="left:988px;top:663px;color:#5d6068"><svg width="21" height="20" viewBox="0 0 21 20" fill="none" stroke="currentColor" stroke-width="1.7" stroke-linecap="round" stroke-linejoin="round"><path d="M2.9 0.9H18a1.8 1.8 0 0 1 1.8 1.8V14a1.8 1.8 0 0 1-1.8 1.8H6.6L2 18.4A.6.6 0 0 1 1.1 17.9V2.7a1.8 1.8 0 0 1 1.8-1.8z"/><path d="M5.4 6.8H14.8M5.4 10.4H11.6"/></svg></div>
<div class="t" style="left:1017px;top:662px;color:#6b6e76">Add comment</div>
<div class="date" style="left:1928px;top:660px;width:137px"></div>
<div class="ic" style="left:1937px;top:663px;color:#292a2e"><svg width="17" height="19" viewBox="0 0 17 19" fill="none" stroke="currentColor" stroke-width="1.9" stroke-linecap="round" stroke-linejoin="round"><rect x="0.95" y="2.85" width="14.8" height="13.9" rx="2.2"/><path d="M0.95 8H15.75M5.1 1.1V4.3M11.6 1.1V4.3"/></svg></div>
<div class="t" style="left:1961px;top:662px;font-size:17.3px">Dec 3, 2024</div>
<div class="date" style="left:2102px;top:660px;width:60px"></div>
<div class="ic" style="left:2111px;top:663px;color:#292a2e"><svg width="17" height="19" viewBox="0 0 17 19" fill="none" stroke="currentColor" stroke-width="1.9" stroke-linecap="round" stroke-linejoin="round"><rect x="0.95" y="2.85" width="14.8" height="13.9" rx="2.2"/><path d="M0.95 8H15.75M5.1 1.1V4.3M11.6 1.1V4.3"/></svg></div>
<div class="hl" style="left:0;top:744px;width:2134px"></div>
<div class="cb" style="left:30px;top:712px"></div>
<div class="ic" style="left:122px;top:712px"><svg width="17" height="17" viewBox="0 0 17 17" fill="none" stroke="#357de8" stroke-width="2" stroke-linecap="round" stroke-linejoin="round"><rect x="1.2" y="1.2" width="14.6" height="14.6" rx="2.6"/><path d="M4.6 8.6l2.6 2.6 5-5.6"/></svg></div>
<div class="t" style="left:220px;top:710px;color:#505258">MAV-70</div>
<div class="t" style="left:362px;top:710px">Find Audio Bits</div>
<div class="loz" style="left:845px;top:711px;width:52px;background:#dddee1">TO DO</div>
<div class="ic" style="left:988px;top:711px;color:#5d6068"><svg width="21" height="20" viewBox="0 0 21 20" fill="none" stroke="currentColor" stroke-width="1.7" stroke-linecap="round" stroke-linejoin="round"><path d="M2.9 0.9H18a1.8 1.8 0 0 1 1.8 1.8V14a1.8 1.8 0 0 1-1.8 1.8H6.6L2 18.4A.6.6 0 0 1 1.1 17.9V2.7a1.8 1.8 0 0 1 1.8-1.8z"/><path d="M5.4 6.8H14.8M5.4 10.4H11.6"/></svg></div>
<div class="t" style="left:1017px;top:710px;color:#6b6e76">Add comment</div>
<div class="spr" style="left:1165px;top:709px;width:116px;border-color:#a3a5ab"></div>
<div class="t" style="left:1171px;top:710px">MAV Sprint 4</div>
<div class="av" style="left:1339px;top:706px;background:#1d9fc1;color:#1c2b42">Y</div>
<div class="t" style="left:1375px;top:710px">yulez995</div>
<div class="date" style="left:1928px;top:708px;width:144px"></div>
<div class="ic" style="left:1937px;top:711px;color:#292a2e"><svg width="17" height="19" viewBox="0 0 17 19" fill="none" stroke="currentColor" stroke-width="1.9" stroke-linecap="round" stroke-linejoin="round"><rect x="0.95" y="2.85" width="14.8" height="13.9" rx="2.2"/><path d="M0.95 8H15.75M5.1 1.1V4.3M11.6 1.1V4.3"/></svg></div>
<div class="t" style="left:1961px;top:710px;font-size:17.3px">Nov 19, 2024</div>
<div class="date" style="left:2102px;top:708px;width:60px"></div>
<div class="ic" style="left:2111px;top:711px;color:#292a2e"><svg width="17" height="19" viewBox="0 0 17 19" fill="none" stroke="currentColor" stroke-width="1.9" stroke-linecap="round" stroke-linejoin="round"><rect x="0.95" y="2.85" width="14.8" height="13.9" rx="2.2"/><path d="M0.95 8H15.75M5.1 1.1V4.3M11.6 1.1V4.3"/></svg></div>
<div class="hl" style="left:0;top:792px;width:2134px"></div>
<div class="cb" style="left:30px;top:760px"></div>
<div class="ic" style="left:122px;top:760px"><svg width="17" height="17" viewBox="0 0 17 17" fill="none" stroke="#357de8" stroke-width="2" stroke-linecap="round" stroke-linejoin="round"><rect x="1.2" y="1.2" width="14.6" height="14.6" rx="2.6"/><path d="M4.6 8.6l2.6 2.6 5-5.6"/></svg></div>
<div class="t" style="left:220px;top:758px;color:#505258">MAV-69</div>
<div class="t" style="left:362px;top:758px">Decor (3 models)</div>
<div class="loz" style="left:845px;top:759px;width:52px;background:#dddee1">TO DO</div>
<div class="ic" style="left:988px;top:759px;color:#5d6068"><svg width="21" height="20" viewBox="0 0 21 20" fill="none" stroke="currentColor" stroke-width="1.7" stroke-linecap="round" stroke-linejoin="round"><path d="M2.9 0.9H18a1.8 1.8 0 0 1 1.8 1.8V14a1.8 1.8 0 0 1-1.8 1.8H6.6L2 18.4A.6.6 0 0 1 1.1 17.9V2.7a1.8 1.8 0 0 1 1.8-1.8z"/><path d="M5.4 6.8H14.8M5.4 10.4H11.6"/></svg></div>
<div class="t" style="left:1017px;top:758px;color:#6b6e76">Add comment</div>
<div class="spr" style="left:1165px;top:757px;width:116px;border-color:#a3a5ab"></div>
<div class="t" style="left:1171px;top:758px">MAV Sprint 4</div>
<div class="av" style="left:1339px;top:754px;background:#1f8a5c">CL</div>
<div class="t" style="left:1375px;top:758px">Chanel Lim</div>
<div class="date" style="left:1928px;top:756px;width:144px"></div>
<div class="ic" style="left:1937px;top:759px;color:#292a2e"><svg width="17" height="19" viewBox="0 0 17 19" fill="none" stroke="currentColor" stroke-width="1.9" stroke-linecap="round" stroke-linejoin="round"><rect x="0.95" y="2.85" width="14.8" height="13.9" rx="2.2"/><path d="M0.95 8H15.75M5.1 1.1V4.3M11.6 1.1V4.3"/></svg></div>
<div class="t" style="left:1961px;top:758px;font-size:17.3px">Nov 19, 2024</div>
<div class="date" style="left:2102px;top:756px;width:60px"></div>
<div class="ic" style="left:2111px;top:759px;color:#292a2e"><svg width="17" height="19" viewBox="0 0 17 19" fill="none" stroke="currentColor" stroke-width="1.9" stroke-linecap="round" stroke-linejoin="round"><rect x="0.95" y="2.85" width="14.8" height="13.9" rx="2.2"/><path d="M0.95 8H15.75M5.1 1.1V4.3M11.6 1.1V4.3"/></svg></div>
<div class="hl" style="left:0;top:840px;width:2134px"></div>
<div class="cb" style="left:30px;top:808px"></div>
<div class="ic" style="left:122px;top:808px"><svg width="17" height="17" viewBox="0 0 17 17" fill="none" stroke="#357de8" stroke-width="2" stroke-linecap="round" stroke-linejoin="round"><rect x="1.2" y="1.2" width="14.6" height="14.6" rx="2.6"/><path d="M4.6 8.6l2.6 2.6 5-5.6"/></svg></div>
<div class="t" style="left:220px;top:806px;color:#505258">MAV-68</div>
<div class="t" style="left:362px;top:806px">Draft NPC Base</div>
<div class="loz" style="left:845px;top:807px;width:52px;background:#dddee1">TO DO</div>
<div class="ic" style="left:988px;top:807px;color:#5d6068"><svg width="21" height="20" viewBox="0 0 21 20" fill="none" stroke="currentColor" stroke-width="1.7" stroke-linecap="round" stroke-linejoin="round"><path d="M2.9 0.9H18a1.8 1.8 0 0 1 1.8 1.8V14a1.8 1.8 0 0 1-1.8 1.8H6.6L2 18.4A.6.6 0 0 1 1.1 17.9V2.7a1.8 1.8 0 0 1 1.8-1.8z"/><path d="M5.4 6.8H14.8M5.4 10.4H11.6"/></svg></div>
<div class="t" style="left:1017px;top:806px;color:#6b6e76">Add comment</div>
<div class="spr" style="left:1165px;top:805px;width:116px;border-color:#a3a5ab"></div>
<div class="t" style="left:1171px;top:806px">MAV Sprint 4</div>
<div class="av" style="left:1339px;top:802px;background:#5746b6">KW</div>
<div class="t" style="left:1375px;top:806px">Kiichiro Wang</div>
<div class="date" style="left:1928px;top:804px;width:144px"></div>
<div class="ic" style="left:1937px;top:807px;color:#292a2e"><svg width="17" height="19" viewBox="0 0 17 19" fill="none" stroke="currentColor" stroke-width="1.9" stroke-linecap="round" stroke-linejoin="round"><rect x="0.95" y="2.85" width="14.8" height="13.9" rx="2.2"/><path d="M0.95 8H15.75M5.1 1.1V4.3M11.6 1.1V4.3"/></svg></div>
<div class="t" style="left:1961px;top:806px;font-size:17.3px">Nov 19, 2024</div>
<div class="date" style="left:2102px;top:804px;width:60px"></div>
<div class="ic" style="left:2111px;top:807px;color:#292a2e"><svg width="17" height="19" viewBox="0 0 17 19" fill="none" stroke="currentColor" stroke-width="1.9" stroke-linecap="round" stroke-linejoin="round"><rect x="0.95" y="2.85" width="14.8" height="13.9" rx="2.2"/><path d="M0.95 8H15.75M5.1 1.1V4.3M11.6 1.1V4.3"/></svg></div>
<div class="vl" style="left:78px;top:0;height:812px"></div>
<div class="vl" style="left:210px;top:0;height:812px"></div>
<div class="vl" style="left:354px;top:0;height:812px"></div>
<div class="vl" style="left:834px;top:0;height:812px"></div>
<div class="vl" style="left:978px;top:0;height:812px"></div>
<div class="vl" style="left:1152px;top:0;height:812px"></div>
<div class="vl" style="left:1326px;top:0;height:812px"></div>
<div class="vl" style="left:1542px;top:0;height:812px"></div>
<div class="vl" style="left:1716px;top:0;height:812px"></div>
<div class="vl" style="left:1920px;top:0;height:812px"></div>
<div class="vl" style="left:2094px;top:0;height:812px"></div>
</div>
<div class="a" style="left:0;top:0;width:2156px;height:48px;background:#f8f8f8;box-shadow:0 3px 6px rgba(0,0,0,0.07)"></div>
<div class="hl" style="left:0;top:48px;width:2156px;background:rgba(0,0,0,0.1)"></div>
<div class="vl" style="left:78px;top:0;height:48px"></div>
<div class="vl" style="left:210px;top:0;height:48px"></div>
<div class="vl" style="left:354px;top:0;height:48px"></div>
<div class="vl" style="left:834px;top:0;height:48px"></div>
<div class="vl" style="left:978px;top:0;height:48px"></div>
<div class="vl" style="left:1152px;top:0;height:48px"></div>
<div class="vl" style="left:1326px;top:0;height:48px"></div>
<div class="vl" style="left:1542px;top:0;height:48px"></div>
<div class="vl" style="left:1716px;top:0;height:48px"></div>
<div class="vl" style="left:1920px;top:0;height:48px"></div>
<div class="vl" style="left:2094px;top:0;height:48px"></div>
<div class="vl" style="left:2114px;top:0;height:48px"></div>
<div class="cb" style="left:30px;top:15px;background:transparent"></div>
<div class="hd" style="left:118px;top:14px">Type</div>
<div class="hd" style="left:220px;top:14px">Key</div>
<div class="hd" style="left:364px;top:14px">Summary</div>
<div class="hd" style="left:844px;top:14px">Status</div>
<div class="hd" style="left:988px;top:14px">Comments</div>
<div class="hd" style="left:1162px;top:14px">Sprint</div>
<div class="hd" style="left:1336px;top:14px">Assignee</div>
<div class="hd" style="left:1552px;top:14px">Due date</div>
<div class="hd" style="left:1726px;top:14px">Labels</div>
<div class="hd" style="left:1930px;top:14px">Created</div>
<div class="hd" style="left:2105px;top:14px">U</div>
<div class="ic" style="left:948px;top:16px;color:#505258"><svg width="12" height="14" viewBox="0 0 12 14" fill="none" stroke="currentColor" stroke-width="1.8" stroke-linecap="round" stroke-linejoin="round"><path d="M5.8 2V11.6M1.6 7.5L5.8 11.6 10 7.5"/></svg></div>
<div class="a" style="left:2115px;top:0;width:40px;height:48px;background:#f8f8f8"></div>
<div class="ic" style="left:2126px;top:15px;color:#505258"><svg width="17" height="17" viewBox="0 0 17 17" fill="none" stroke="currentColor" stroke-width="1.6"><path d="M8.5 0v17M0 8.5h17"/></svg></div>
<div class="a" style="left:0;top:823px;width:2156px;height:10px;background:linear-gradient(rgba(0,0,0,0),rgba(0,0,0,0.045))"></div>
<div class="hl" style="left:0;top:833px;width:2156px;background:#e6e6e6"></div>
<div class="a" style="left:2138px;top:250px;width:9px;height:229px;border-radius:5px;background:#cfd6de"></div>
<div class="ic" style="left:2139px;top:55px;color:#42444a"><svg width="9" height="6" viewBox="0 0 9 6" fill="none" stroke="currentColor" stroke-width="1.6" stroke-linecap="round"><path d="M1 5l3.5-3.5L8 5"/></svg></div>
<div class="ic" style="left:2139px;top:798px;color:#42444a"><svg width="9" height="6" viewBox="0 0 9 6" fill="none" stroke="currentColor" stroke-width="1.6" stroke-linecap="round"><path d="M1 1l3.5 3.5L8 1"/></svg></div>
<div class="a" style="left:22px;top:819px;width:1477px;height:8px;border-radius:4px;background:#cfd6de"></div>
<div class="ic" style="left:7.5px;top:819.5px;color:#8c8f97"><svg width="6" height="9" viewBox="0 0 6 9" fill="none" stroke="currentColor" stroke-width="1.4" stroke-linecap="round"><path d="M5 1.2L1.6 4.5 5 7.8"/></svg></div>
<div class="ic" style="left:2118px;top:819px;color:#42444a"><svg width="6" height="9" viewBox="0 0 6 9" fill="none" stroke="currentColor" stroke-width="1.6" stroke-linecap="round"><path d="M1 1l3.5 3.5L1 8"/></svg></div>
</div>
</body></html>
